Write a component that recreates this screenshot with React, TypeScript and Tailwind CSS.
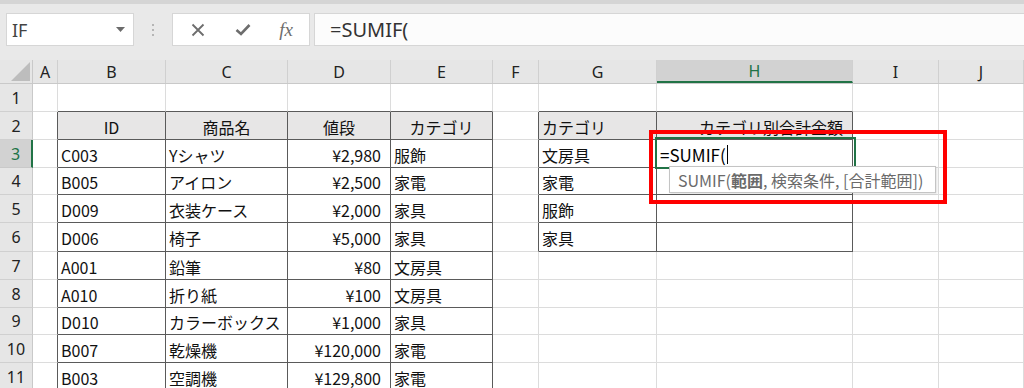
import React from "react";

const colW = [25, 108, 122, 103, 102, 46, 118, 196, 86, 85];
const colNames = ["A", "B", "C", "D", "E", "F", "G", "H", "I", "J"];
const rowH = [28, 28, 28, 27, 28, 29, 28, 28, 27, 28, 28];

type CellDef = { t: string; a?: "l" | "r" | "c"; hdr?: boolean };

const data: Record<number, Record<number, CellDef>> = {
  2: {
    1: { t: "ID", a: "c", hdr: true },
    2: { t: "商品名", a: "c", hdr: true },
    3: { t: "値段", a: "c", hdr: true },
    4: { t: "カテゴリ", a: "c", hdr: true },
    6: { t: "カテゴリ", a: "l", hdr: true },
    7: { t: "カテゴリ別合計金額", a: "r", hdr: true },
  },
  3: { 1: { t: "C003" }, 2: { t: "Yシャツ" }, 3: { t: "¥2,980", a: "r" }, 4: { t: "服飾" }, 6: { t: "文房具" } },
  4: { 1: { t: "B005" }, 2: { t: "アイロン" }, 3: { t: "¥2,500", a: "r" }, 4: { t: "家電" }, 6: { t: "家電" } },
  5: { 1: { t: "D009" }, 2: { t: "衣装ケース" }, 3: { t: "¥2,000", a: "r" }, 4: { t: "家具" }, 6: { t: "服飾" } },
  6: { 1: { t: "D006" }, 2: { t: "椅子" }, 3: { t: "¥5,000", a: "r" }, 4: { t: "家具" }, 6: { t: "家具" } },
  7: { 1: { t: "A001" }, 2: { t: "鉛筆" }, 3: { t: "¥80", a: "r" }, 4: { t: "文房具" } },
  8: { 1: { t: "A010" }, 2: { t: "折り紙" }, 3: { t: "¥100", a: "r" }, 4: { t: "文房具" } },
  9: { 1: { t: "D010" }, 2: { t: "カラーボックス" }, 3: { t: "¥1,000", a: "r" }, 4: { t: "家具" } },
  10: { 1: { t: "B007" }, 2: { t: "乾燥機" }, 3: { t: "¥120,000", a: "r" }, 4: { t: "家電" } },
  11: { 1: { t: "B003" }, 2: { t: "空調機" }, 3: { t: "¥129,800", a: "r" }, 4: { t: "家電" } },
};

function inTable(r: number, c: number) {
  return (r >= 2 && r <= 11 && c >= 1 && c <= 4) || (r >= 2 && r <= 6 && c >= 6 && c <= 7);
}

function Cell({ r, c }: { r: number; c: number }) {
  const def = data[r]?.[c];
  const darkR = inTable(r, c) || inTable(r, c + 1);
  const darkB = inTable(r, c) || inTable(r + 1, c);
  const hdr = def?.hdr;
  const align = def?.a === "r" ? "justify-end pr-[9px]" : def?.a === "c" ? "justify-center" : "justify-start pl-[3px]";
  return (
    <div
      className={
        "box-border flex items-center shrink-0 overflow-visible whitespace-nowrap border-r border-b pt-[2px] " +
        (darkR ? "border-r-[#5a5a5a] " : "border-r-[#dcdcdc] ") +
        (darkB ? "border-b-[#5a5a5a] " : "border-b-[#dcdcdc] ") +
        (hdr ? "bg-[#e7e6e6] " : "bg-white ") +
        align
      }
      style={{ width: colW[c], height: "100%" }}
    >
      {def ? <span className="text-[16px] leading-[20px] text-[#111]">{def.t}</span> : null}
      {r === 3 && c === 7 ? (
        <span className="text-[17px] leading-[20px] text-black flex items-center">
          =SUMIF(<span className="inline-block w-[1px] h-[19px] bg-black ml-[1px]" />
        </span>
      ) : null}
    </div>
  );
}

export default function App() {
  return (
    <div className="relative w-[1024px] h-[388px] overflow-hidden bg-[#e9e9e9] font-['Noto_Sans_CJK_JP','Noto_Sans',sans-serif]">
      {/* top band */}
      <div className="h-[4px] bg-[#d5d5d5]" />
      {/* formula bar */}
      <div className="flex items-stretch h-[33px] mt-[9px] pl-[6px]">
        <div className="box-border w-[128px] border border-[#d6d6d6] bg-white flex items-center justify-between pl-[5px] pr-[8px]">
          <span className="text-[18px] text-[#444] font-['Noto_Sans',sans-serif] leading-none">IF</span>
          <svg width="9" height="5" viewBox="0 0 9 5"><polygon points="0,0 9,0 4.5,5" fill="#6b6b6b" /></svg>
        </div>
        <div className="w-[38px] flex flex-col items-center justify-center gap-[3px]">
          <span className="w-[2px] h-[2px] bg-[#b5b5b5]" />
          <span className="w-[2px] h-[2px] bg-[#b5b5b5]" />
          <span className="w-[2px] h-[2px] bg-[#b5b5b5]" />
        </div>
        <div className="box-border w-[138px] border border-[#d6d6d6] bg-white flex items-center">
          <div className="w-[50px] flex justify-center">
            <svg width="14" height="14" viewBox="0 0 14 14"><path d="M1.5 1.5 L12.5 12.5 M12.5 1.5 L1.5 12.5" stroke="#6d6d6d" strokeWidth="1.8" /></svg>
          </div>
          <div className="w-[40px] flex justify-center">
            <svg width="16" height="13" viewBox="0 0 16 13"><path d="M1.5 7 L6 11 L14.5 2" stroke="#6d6d6d" strokeWidth="2.6" fill="none" /></svg>
          </div>
          <div className="w-[46px] flex justify-center">
            <span className="font-['Liberation_Serif',serif] italic text-[19px] text-[#6d6d6d] leading-none">fx</span>
          </div>
        </div>
        <div className="box-border flex-1 ml-[4px] border border-r-0 border-[#d6d6d6] bg-[#fcfcfc] flex items-center pl-[15px]">
          <span className="text-[20px] text-[#333] font-['Noto_Sans',sans-serif] leading-none">=SUMIF(</span>
        </div>
      </div>
      {/* sheet */}
      <div className="mt-[14px]">
        {/* column header */}
        <div className="flex h-[23px] bg-[#e6e6e6] border-b border-[#c9c9c9] box-content">
          <div className="box-border w-[33px] shrink-0 relative border-r border-[#c9c9c9]">
            <svg className="absolute right-[2px] bottom-[2px]" width="19" height="19" viewBox="0 0 19 19">
              <polygon points="19,0 19,19 0,19" fill="#bdbdbd" />
            </svg>
          </div>
          {colNames.map((n, i) => (
            <div
              key={n}
              className={
                "box-border shrink-0 flex items-center justify-center border-r border-[#d0d0d0] text-[16px] font-['Noto_Sans',sans-serif] " +
                (i === 7 ? "bg-[#d2d2d2] text-[#217346] border-b-2 border-b-[#217346]" : "text-[#222]")
              }
              style={{ width: colW[i] }}
            >
              {n}
            </div>
          ))}
        </div>
        {/* rows */}
        {rowH.map((h, ri) => {
          const r = ri + 1;
          return (
            <div key={r} className="flex" style={{ height: h }}>
              <div
                className={
                  "box-border w-[33px] shrink-0 flex items-center justify-center border-b border-r text-[16px] font-['Noto_Sans',sans-serif] " +
                  (r === 3
                    ? "bg-[#d2d2d2] text-[#217346] border-b-[#c9c9c9] border-r-2 border-r-[#217346]"
                    : "bg-[#e6e6e6] text-[#222] border-b-[#d0d0d0] border-r-[#c9c9c9]")
                }
              >
                {r}
              </div>
              {colW.map((_, c) => (
                <Cell key={c} r={r} c={c} />
              ))}
            </div>
          );
        })}
      </div>
      {/* active cell border */}
      <div className="absolute left-[655px] top-[137px] w-[201px] h-[32px] border-2 border-[#217346] box-border pointer-events-none" />
      {/* tooltip */}
      <div className="absolute left-[669px] top-[166px] w-[267px] h-[27px] box-border border border-[#c4c4c4] bg-white flex items-center pl-[8px] text-[16px] text-[#6a6a6a] whitespace-nowrap shadow-[1px_1px_2px_rgba(0,0,0,0.12)]">
        SUMIF(<span className="font-bold">範囲</span>, 検索条件, [合計範囲])
      </div>
      {/* red highlight */}
      <div className="absolute left-[649px] top-[130px] w-[298px] h-[74px] box-border border-4 border-[#ff0000] pointer-events-none" />
    </div>
  );
}
